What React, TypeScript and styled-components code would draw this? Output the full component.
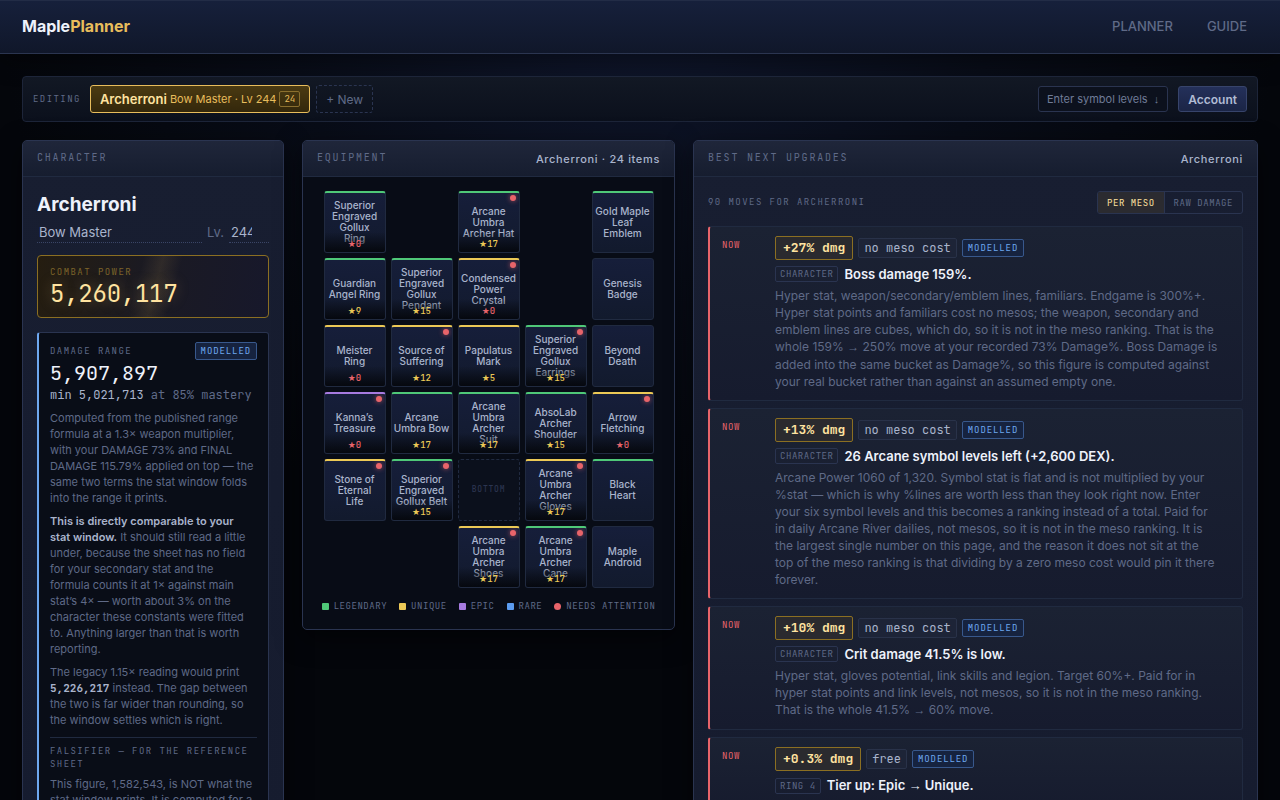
import React from "react";
import styled, { createGlobalStyle, css } from "styled-components";

const sans = `Inter, "Liberation Sans", sans-serif`;
const mono = `"JetBrains Mono", "DejaVu Sans Mono", monospace`;

const c = {
  text: "#eef2fb",
  soft: "#a9b4cc",
  dim: "#5f6a87",
  line: "#2a3450",
  faint: "#202a40",
  gold: "#e8bd5c",
  goldText: "#ffe3a0",
  red: "#e8646a",
  blue: "#6ea8f0",
};

const GlobalStyle = createGlobalStyle`
  *, *::before, *::after { box-sizing: border-box; }
  html { background: #04060b; }
  body {
    margin: 0;
    min-height: 100vh;
    font-family: ${sans};
    font-size: 13px;
    color: ${c.text};
    background: radial-gradient(ellipse 640px 560px at 50% 0, #0f162c 0%, #080c17 55%, #04060b 100%);
  }
  h1, h2, h3, p, ul { margin: 0; padding: 0; }
  button, input { font-family: inherit; }
`;

const SiteHeader = styled.header`
  display: flex;
  align-items: center;
  justify-content: space-between;
  height: 54px;
  padding: 0 22px;
  background: linear-gradient(#16203b, #10172a);
  border-top: 1px solid #222c46;
  border-bottom: 1px solid #2b3550;
  box-shadow: 0 6px 24px rgba(0, 0, 0, 0.4);
`;

const Brand = styled.a`
  font-size: 16px;
  line-height: 20px;
  padding-bottom: 2px;
  font-weight: 700;
  color: ${c.text};
  text-decoration: none;

  span { color: ${c.gold}; }
`;

const Nav = styled.nav`
  display: flex;
  gap: 12px;
  padding-bottom: 2px;
`;

const NavLink = styled.a`
  padding: 6px 11px;
  font-size: 13px;
  font-weight: 500;
  text-transform: uppercase;
  text-decoration: none;
  color: ${c.dim};
`;

const Page = styled.main`
  padding: 22px 22px 40px;
  height: calc(100vh - 54px);
  overflow: hidden;
`;

const Label = styled.span`
  font-family: ${mono};
  font-size: 9px;
  line-height: 13px;
  letter-spacing: 0.16em;
  text-transform: uppercase;
  color: ${c.dim};
`;

const Arrow = styled.span`
  font-family: "Liberation Sans", sans-serif;
  font-weight: 400;
`;

const EditBar = styled.section`
  display: flex;
  align-items: center;
  justify-content: space-between;
  min-height: 46px;
  padding: 0 10px;
  margin-bottom: 18px;
  background: linear-gradient(#121824, #0b101c);
  border: 1px solid #1d2539;
  border-radius: 4px;
`;

const BarGroup = styled.div<{ $gap: number }>`
  display: flex;
  align-items: center;
  gap: ${(p) => p.$gap}px;
`;

const CharacterTab = styled.button`
  display: flex;
  align-items: center;
  gap: 3px;
  height: 28px;
  margin-left: 3px;
  padding: 0 9px;
  font-size: 13px;
  font-weight: 600;
  color: ${c.goldText};
  background: linear-gradient(#4a3a12, #33270b);
  border: 1px solid ${c.gold};
  border-radius: 3px;

  small { font-size: 11px; font-weight: 400; color: ${c.gold}; }
`;

const Count = styled.span`
  padding: 0 4px;
  font-family: ${mono};
  font-size: 9px;
  font-weight: 400;
  line-height: 14px;
  color: ${c.gold};
  border: 1px solid #8b6f2e;
  border-radius: 2px;
`;

const NewButton = styled.button`
  height: 28px;
  padding: 0 9px;
  font-size: 12px;
  color: ${c.dim};
  background: transparent;
  border: 1px dashed ${c.line};
  border-radius: 3px;
`;

const GhostButton = styled.button`
  height: 26px;
  padding: 0 8px;
  font-size: 11px;
  color: #6f7b97;
  background: #0c111d;
  border: 1px solid ${c.line};
  border-radius: 3px;

  ${Arrow} { margin-left: 3px; }
`;

const AccountButton = styled.button`
  height: 26px;
  padding: 0 9px;
  font-size: 12px;
  font-weight: 600;
  color: #b0bbd4;
  background: linear-gradient(#24305a, #1b2546);
  border: 1px solid #37446b;
  border-radius: 3px;
`;

const Columns = styled.div`
  display: grid;
  grid-template-columns: 262px minmax(0, 373fr) minmax(0, 565fr);
  gap: 18px;
  align-items: start;
`;

const Panel = styled.section<{ $dark?: boolean }>`
  background: ${(p) => (p.$dark ? "#080c16" : "linear-gradient(#181e31, #161c2f)")};
  border: 1px solid ${c.line};
  border-radius: 5px;
  box-shadow: 0 8px 26px rgba(0, 0, 0, 0.5);
  overflow: hidden;
`;

const PanelHead = styled.header`
  display: flex;
  justify-content: space-between;
  height: 36px;
  padding: 10px 14px;
  background: linear-gradient(#1f263a, #161d2f);
  border-bottom: 1px solid ${c.faint};

  span { font-size: 11px; line-height: 16px; font-weight: 500; color: ${c.soft}; letter-spacing: 0.06em; }
`;

const PanelTitle = styled.h2`
  font-family: ${mono};
  font-size: 10px;
  font-weight: 400;
  line-height: 13px;
  letter-spacing: 0.18em;
  text-transform: uppercase;
  color: ${c.dim};
`;

const CharacterBody = styled.div`
  padding: 14px;
`;

const CharacterName = styled.h1`
  font-size: 19px;
  line-height: 28px;
  font-weight: 700;
`;

const IdentityRow = styled.div`
  display: flex;
  align-items: center;
  margin: 2px 0 12px;
  color: ${c.dim};
  font-size: 13px;

  label { margin: 0 5px; }
`;

const InlineInput = styled.input`
  min-width: 0;
  height: 22px;
  padding: 0 2px;
  font-size: 13px;
  color: ${c.soft};
  background: transparent;
  border: 0;
  border-bottom: 1px dotted #3a4566;

  &[type="text"] { flex: 1; }
  &[type="number"] { width: 40px; }
`;

const PowerCard = styled.div`
  height: 63px;
  padding: 10px 12px;
  border: 1px solid #8b6f22;
  border-radius: 4px;
  background:
    linear-gradient(105deg, transparent 43%, rgba(232, 189, 92, 0.1) 51%, transparent 59%),
    linear-gradient(100deg, #251d10, #1b1a22 45%, #17182b);

  ${Label} { display: block; color: #7d642a; }
`;

const PowerValue = styled.strong`
  display: block;
  font-family: ${mono};
  font-size: 24px;
  line-height: 30px;
  font-weight: 400;
  letter-spacing: -0.01em;
  color: ${c.goldText};
  text-shadow: 0 0 14px rgba(232, 189, 92, 0.35);
`;

const RangeCard = styled.div`
  margin-top: 14px;
  padding: 9px 11px 14px;
  background: #090d17;
  border: 1px solid ${c.line};
  border-left: 2px solid ${c.blue};
  border-radius: 3px;
`;

const RangeHead = styled.div`
  display: flex;
  justify-content: space-between;
  align-items: center;
`;

const Tag = styled.span`
  padding: 0 5px;
  font-family: ${mono};
  font-size: 9px;
  line-height: 16px;
  letter-spacing: 0.1em;
  color: ${c.blue};
  background: #16233f;
  border: 1px solid #38588c;
  border-radius: 2px;
`;

const RangeValue = styled.strong`
  display: block;
  font-family: ${mono};
  font-size: 20px;
  line-height: 26px;
  font-weight: 400;
`;

const RangeMin = styled.div`
  margin-bottom: 6px;
  font-family: ${mono};
  font-size: 12px;
  line-height: 18px;
  white-space: nowrap;
  color: ${c.dim};

  b { font-weight: 400; color: ${c.soft}; }
`;

const Note = styled.p`
  margin-bottom: 7px;
  padding-right: 2px;
  font-size: 11px;
  line-height: 16px;
  color: ${c.dim};

  strong { font-weight: 600; color: ${c.soft}; }
  code { font-family: ${mono}; font-weight: 700; color: ${c.soft}; }
`;

const Falsifier = styled.div`
  margin: 9px 0 5px;
  padding-top: 7px;
  border-top: 1px solid ${c.faint};

  ${Label} { display: block; }
`;

const EquipBody = styled.div`
  padding: 14px 14px 16px;
`;

const EquipGrid = styled.ul`
  display: grid;
  grid-template-columns: repeat(5, 62px);
  grid-auto-rows: 62px;
  gap: 5px;
  justify-content: center;
  list-style: none;
`;

const rarity: Record<string, string> = {
  L: "#4fc878",
  U: "#ecc956",
  E: "#a77be0",
  R: "#5b9cf0",
};

const Tile = styled.li<{ $rarity?: string; $empty?: boolean }>`
  position: relative;
  display: flex;
  align-items: center;
  justify-content: center;
  padding-bottom: 1px;
  overflow: hidden;
  font-size: 10px;
  line-height: 11px;
  font-weight: 500;
  text-align: center;
  white-space: pre-line;
  color: ${c.soft};
  background: linear-gradient(#161e3a, #121a2d);
  border: 1px solid ${c.faint};
  border-radius: 3px;
  ${(p) => p.$rarity && css`border-top: 2px solid ${rarity[p.$rarity]};`}
  ${(p) => p.$empty && css`
    background: #0b101c;
    border-style: dashed;
    font-family: ${mono};
    font-size: 8px;
    letter-spacing: 0.1em;
    color: #2b3550;
  `}
`;

const Stars = styled.span<{ $zero: boolean }>`
  position: absolute;
  left: 0;
  right: 0;
  bottom: 0;
  padding-top: 6px;
  padding-bottom: 2px;
  font-family: ${mono};
  font-size: 9px;
  line-height: 12px;
  color: ${(p) => (p.$zero ? c.red : "#ecc956")};
  background: linear-gradient(transparent, rgba(4, 6, 11, 0.9));

  i { font-family: "DejaVu Sans", sans-serif; font-style: normal; }
`;

const Alert = styled.i`
  position: absolute;
  top: 2px;
  right: 3px;
  width: 6px;
  height: 6px;
  border-radius: 50%;
  background: ${c.red};
  box-shadow: 0 0 5px rgba(232, 100, 106, 0.7);
`;

const Legend = styled.ul`
  display: flex;
  justify-content: center;
  gap: 12px;
  margin-top: 11px;
  list-style: none;
  white-space: nowrap;
  font-family: ${mono};
  font-size: 9px;
  line-height: 14px;
  letter-spacing: 0.06em;
  color: ${c.dim};
`;

const LegendItem = styled.li<{ $color: string; $round?: boolean }>`
  display: flex;
  align-items: center;
  gap: 5px;

  &::before {
    content: "";
    width: 7px;
    height: 7px;
    background: ${(p) => p.$color};
    border-radius: ${(p) => (p.$round ? "50%" : "1px")};
  }
`;

const UpgradeBody = styled.div`
  padding: 14px;
`;

const UpgradeBar = styled.div`
  display: flex;
  align-items: center;
  justify-content: space-between;
  margin-bottom: 12px;
`;

const Segmented = styled.div`
  display: flex;
  border: 1px solid ${c.line};
  border-radius: 3px;
  overflow: hidden;
`;

const Segment = styled.button<{ $on?: boolean }>`
  height: 21px;
  padding: 0 9px;
  font-family: ${mono};
  font-size: 9px;
  letter-spacing: 0.06em;
  text-transform: uppercase;
  border: 0;
  color: ${(p) => (p.$on ? c.goldText : c.dim)};
  background: ${(p) => (p.$on ? "#2b2b30" : "transparent")};
  & + & { border-left: 1px solid ${c.line}; }
`;

const UpgradeList = styled.ul`
  display: grid;
  gap: 7px;
  list-style: none;
`;

const Upgrade = styled.li`
  display: grid;
  grid-template-columns: 42px minmax(0, 1fr);
  gap: 11px;
  padding: 9px 12px 10px;
  background: linear-gradient(#1b2233, #161b2e);
  border: 1px solid ${c.faint};
  border-left: 2px solid ${c.red};
  border-radius: 3px;
`;

const When = styled.span`
  padding-top: 3px;
  font-family: ${mono};
  font-size: 9px;
  line-height: 13px;
  letter-spacing: 0.06em;
  color: ${c.red};
`;

const Badges = styled.div`
  display: flex;
  align-items: center;
  gap: 5px;
`;

const Gain = styled.strong`
  padding: 0 7px;
  font-family: ${mono};
  font-size: 13px;
  line-height: 22px;
  font-weight: 700;
  color: ${c.goldText};
  background: #2a2a2e;
  border: 1px solid #8b6f22;
  border-radius: 2px;
`;

const Cost = styled.span`
  padding: 0 5px;
  font-family: ${mono};
  font-size: 12px;
  line-height: 18px;
  color: ${c.soft};
  background: #1d2437;
  border: 1px solid #293249;
  border-radius: 2px;
`;

const UpgradeTitle = styled.h3`
  display: flex;
  align-items: center;
  gap: 6px;
  margin: 4px 0 3px;
  font-size: 13px;
  line-height: 20px;
  font-weight: 600;
`;

const Slot = styled.span`
  padding: 0 4px;
  font-family: ${mono};
  font-size: 9px;
  line-height: 14px;
  font-weight: 400;
  color: ${c.dim};
  letter-spacing: 0.06em;
  border: 1px solid ${c.line};
  border-radius: 2px;
`;

const Detail = styled.p`
  padding-right: 11px;
  font-size: 12px;
  line-height: 17px;
  color: ${c.dim};
`;

type Item = { name?: string; r?: string; stars?: number; alert?: boolean; empty?: boolean } | null;

const items: Item[] = [
  { name: "Superior\nEngraved\nGollux\nRing", r: "L", stars: 0 },
  null,
  { name: "Arcane\nUmbra\nArcher Hat", r: "L", stars: 17, alert: true },
  null,
  { name: "Gold Maple\nLeaf\nEmblem", r: "L" },
  { name: "Guardian\nAngel Ring", r: "L", stars: 9 },
  { name: "Superior\nEngraved\nGollux\nPendant", r: "L", stars: 15 },
  { name: "Condensed\nPower\nCrystal", r: "U", stars: 0, alert: true },
  null,
  { name: "Genesis\nBadge" },
  { name: "Meister\nRing", r: "U", stars: 0 },
  { name: "Source of\nSuffering", r: "U", stars: 12, alert: true },
  { name: "Papulatus\nMark", r: "U", stars: 5 },
  { name: "Superior\nEngraved\nGollux\nEarrings", r: "L", stars: 15, alert: true },
  { name: "Beyond\nDeath" },
  { name: "Kanna’s\nTreasure", r: "E", stars: 0, alert: true },
  { name: "Arcane\nUmbra Bow", r: "L", stars: 17 },
  { name: "Arcane\nUmbra\nArcher\nSuit", r: "L", stars: 17 },
  { name: "AbsoLab\nArcher\nShoulder", r: "L", stars: 15 },
  { name: "Arrow\nFletching", r: "U", stars: 0, alert: true },
  { name: "Stone of\nEternal\nLife", r: "U", alert: true },
  { name: "Superior\nEngraved\nGollux Belt", r: "L", stars: 15, alert: true },
  { name: "BOTTOM", empty: true },
  { name: "Arcane\nUmbra\nArcher\nGloves", r: "U", stars: 17, alert: true },
  { name: "Black\nHeart", r: "L" },
  null,
  null,
  { name: "Arcane\nUmbra\nArcher\nShoes", r: "U", stars: 17, alert: true },
  { name: "Arcane\nUmbra\nArcher\nCane", r: "L", stars: 17, alert: true },
  { name: "Maple\nAndroid" },
];

const upgrades = [
  {
    gain: "+27% dmg", cost: "no meso cost", slot: "CHARACTER", title: "Boss damage 159%.",
    detail: "Hyper stat, weapon/secondary/emblem lines, familiars. Endgame is 300%+. Hyper stat points and familiars cost no mesos; the weapon, secondary and emblem lines are cubes, which do, so it is not in the meso ranking. That is the whole 159% → 250% move at your recorded 73% Damage%. Boss Damage is added into the same bucket as Damage%, so this figure is computed against your real bucket rather than against an assumed empty one.",
  },
  {
    gain: "+13% dmg", cost: "no meso cost", slot: "CHARACTER", title: "26 Arcane symbol levels left (+2,600 DEX).",
    detail: "Arcane Power 1060 of 1,320. Symbol stat is flat and is not multiplied by your %stat — which is why %lines are worth less than they look right now. Enter your six symbol levels and this becomes a ranking instead of a total. Paid for in\u00a0daily Arcane River dailies, not mesos, so it is not in the meso ranking. It is the largest single number on this page, and the reason it does not sit at the top of the meso ranking is that dividing by a zero meso cost would pin it there forever.",
  },
  {
    gain: "+10% dmg", cost: "no meso cost", slot: "CHARACTER", title: "Crit damage 41.5% is low.",
    detail: "Hyper stat, gloves potential, link skills and legion. Target 60%+. Paid for in hyper stat points and link levels, not mesos, so it is not in the meso ranking. That is the whole 41.5% → 60% move.",
  },
  {
    gain: "+0.3% dmg", cost: "free", slot: "RING 4", title: "Tier up: Epic → Unique.",
    detail: "",
  },
];

/* Sets every arrow in a sentence in the thin arrow face. */
function WithArrows({ text }: { text: string }) {
  const parts = text.split("→");
  return (
    <span>
      {parts.map((part, i) => (
        <React.Fragment key={i}>
          {i > 0 && <Arrow>→</Arrow>}
          {part}
        </React.Fragment>
      ))}
    </span>
  );
}

export default function App() {
  return (
    <>
      <GlobalStyle />
      <SiteHeader>
        <Brand href="#">Maple<span>Planner</span></Brand>
        <Nav>
          <NavLink href="#planner">Planner</NavLink>
          <NavLink href="#guide">Guide</NavLink>
        </Nav>
      </SiteHeader>
      <Page>
        <EditBar>
          <BarGroup $gap={6}>
            <Label>Editing</Label>
            <CharacterTab>
              Archerroni <small>Bow Master · Lv 244</small> <Count>24</Count>
            </CharacterTab>
            <NewButton>+ New</NewButton>
          </BarGroup>
          <BarGroup $gap={10}>
            <GhostButton>Enter symbol levels <Arrow>↓</Arrow></GhostButton>
            <AccountButton>Account</AccountButton>
          </BarGroup>
        </EditBar>
        <Columns>
          <Panel>
            <PanelHead><PanelTitle>Character</PanelTitle></PanelHead>
            <CharacterBody>
              <CharacterName>Archerroni</CharacterName>
              <IdentityRow>
                <InlineInput type="text" aria-label="Class" defaultValue="Bow Master" />
                <label htmlFor="level">Lv.</label>
                <InlineInput id="level" type="number" defaultValue={244} />
              </IdentityRow>
              <PowerCard>
                <Label>Combat power</Label>
                <PowerValue>5,260,117</PowerValue>
              </PowerCard>
              <RangeCard>
                <RangeHead>
                  <Label>Damage range</Label>
                  <Tag>MODELLED</Tag>
                </RangeHead>
                <RangeValue>5,907,897</RangeValue>
                <RangeMin><b>min 5,021,713</b> at 85% mastery</RangeMin>
                <Note>
                  Computed from the published range formula at a 1.3× weapon multiplier, with your DAMAGE 73%
                  and FINAL DAMAGE 115.79% applied on top — the same two terms the stat window folds into the
                  range it prints.
                </Note>
                <Note>
                  <strong>This is directly comparable to your stat window.</strong> It should still read a little
                  under, because the sheet has no field for your secondary stat and the formula&nbsp;counts it at 1×
                  against main stat’s 4× — worth about 3% on the character these constants were fitted to.
                  Anything larger than that is worth reporting.
                </Note>
                <Note>
                  The legacy 1.15× reading would print <code>5,226,217</code> instead. The gap between the two is
                  far wider than rounding, so the window settles which is right.
                </Note>
                <Falsifier><Label>Falsifier — for the reference sheet</Label></Falsifier>
                <Note>
                  This figure, 1,582,543, is NOT what the stat window prints. It is computed for a
                </Note>
              </RangeCard>
            </CharacterBody>
          </Panel>

          <Panel $dark>
            <PanelHead>
              <PanelTitle>Equipment</PanelTitle>
              <span>Archerroni · 24 items</span>
            </PanelHead>
            <EquipBody>
              <EquipGrid>
                {items.map((it, i) =>
                  it ? (
                    <Tile key={i} $rarity={it.r} $empty={it.empty}>
                      {it.name}
                      {it.stars !== undefined && <Stars $zero={it.stars === 0}><i>★</i>{it.stars}</Stars>}
                      {it.alert && <Alert />}
                    </Tile>
                  ) : (
                    <li key={i} aria-hidden="true" />
                  )
                )}
              </EquipGrid>
              <Legend>
                <LegendItem $color={rarity.L}>LEGENDARY</LegendItem>
                <LegendItem $color={rarity.U}>UNIQUE</LegendItem>
                <LegendItem $color={rarity.E}>EPIC</LegendItem>
                <LegendItem $color={rarity.R}>RARE</LegendItem>
                <LegendItem $color={c.red} $round>NEEDS ATTENTION</LegendItem>
              </Legend>
            </EquipBody>
          </Panel>

          <Panel>
            <PanelHead>
              <PanelTitle>Best next upgrades</PanelTitle>
              <span>Archerroni</span>
            </PanelHead>
            <UpgradeBody>
              <UpgradeBar>
                <Label>90 moves for Archerroni</Label>
                <Segmented>
                  <Segment $on>Per meso</Segment>
                  <Segment>Raw damage</Segment>
                </Segmented>
              </UpgradeBar>
              <UpgradeList>
                {upgrades.map((u) => (
                  <Upgrade key={u.title}>
                    <When>NOW</When>
                    <div>
                      <Badges>
                        <Gain>{u.gain}</Gain>
                        <Cost>{u.cost}</Cost>
                        <Tag>MODELLED</Tag>
                      </Badges>
                      <UpgradeTitle><Slot>{u.slot}</Slot><WithArrows text={u.title} /></UpgradeTitle>
                      <Detail><WithArrows text={u.detail} /></Detail>
                    </div>
                  </Upgrade>
                ))}
              </UpgradeList>
            </UpgradeBody>
          </Panel>
        </Columns>
      </Page>
    </>
  );
}
